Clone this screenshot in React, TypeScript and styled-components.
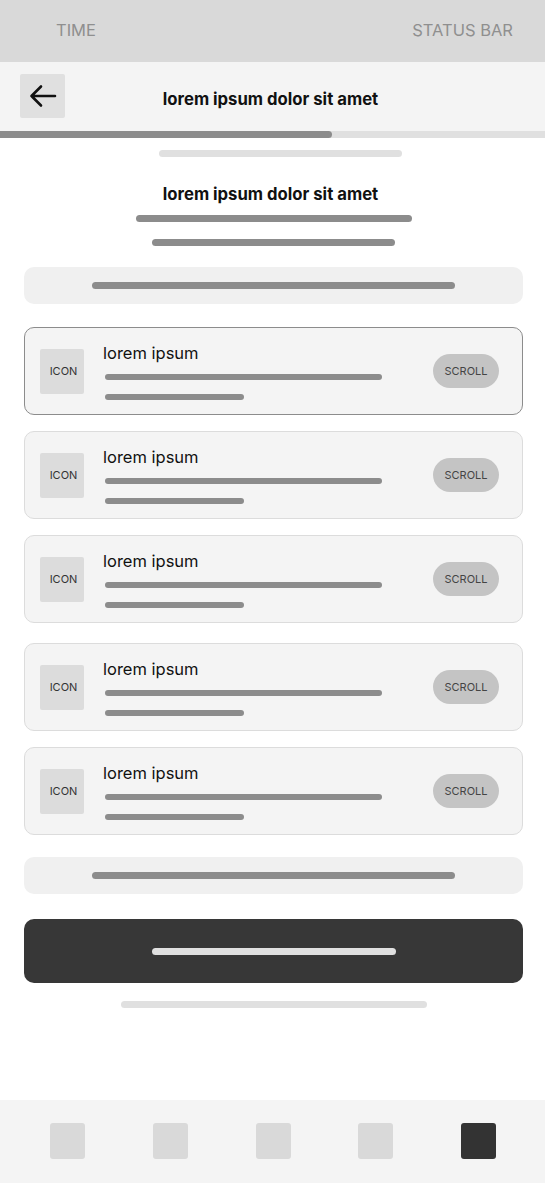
import styled, { createGlobalStyle } from "styled-components";

const Global = createGlobalStyle`
  * { box-sizing: border-box; }
  body {
    margin: 0;
    background: #ffffff;
    font-family: Inter, "Liberation Sans", sans-serif;
    color: #111111;
  }
`;

const Page = styled.div`
  display: flex;
  flex-direction: column;
  min-height: 1183px;
  width: 545px;
`;

const StatusBar = styled.div`
  display: flex;
  align-items: center;
  justify-content: space-between;
  height: 62px;
  padding: 0 32px 2px 56px;
  background: #d9d9d9;
  color: #8f8f8f;
  font-size: 16.5px;
`;

const NavBar = styled.div`
  display: grid;
  grid-template-columns: 45px 1fr 45px;
  align-items: center;
  height: 69px;
  padding: 0 20px;
  background: #f4f4f4;
`;

const BackButton = styled.div`
  display: flex;
  align-items: center;
  justify-content: center;
  width: 45px;
  height: 44px;
  margin-top: -2px;
  border-radius: 2px;
  background: #e0e0e0;
`;

const NavTitle = styled.div`
  text-align: center;
  font-size: 16.7px;
  font-weight: 700;
  margin-top: 4px;
  margin-right: 4px;
`;

const Progress = styled.div`
  height: 7px;
  background: #e0e0e0;
`;

const ProgressFill = styled.div`
  height: 100%;
  background: #8c8c8c;
  border-radius: 0 4px 4px 0;
`;

const Main = styled.div`
  display: flex;
  flex-direction: column;
  align-items: center;
  padding: 0 22px 0 24px;
`;

const Line = styled.div<{ $w: number; $light?: boolean; $top?: number; $shift?: number }>`
  width: ${(p) => p.$w}px;
  height: 7px;
  border-radius: 4px;
  background: ${(p) => (p.$light ? "#e0e0e0" : "#8c8c8c")};
  margin-top: ${(p) => p.$top ?? 0}px;
  margin-left: ${(p) => (p.$shift ?? 0) * 2}px;
`;

const Heading = styled.div`
  margin: 27px 6px 0 0;
  font-size: 16.7px;
  font-weight: 700;
  line-height: 20px;
`;

const InfoBox = styled.div<{ $top: number }>`
  display: flex;
  justify-content: center;
  align-items: center;
  align-self: stretch;
  height: 37px;
  margin-top: ${(p) => p.$top}px;
  border-radius: 10px;
  background: #f0f0f0;
`;

const CardList = styled.div`
  display: flex;
  flex-direction: column;
  align-self: stretch;
  gap: 16px;
  margin-top: 23px;
`;

const Card = styled.div<{ $active?: boolean; $extra?: number }>`
  display: flex;
  align-items: center;
  height: 88px;
  padding: 0 23px 0 15px;
  margin-top: ${(p) => p.$extra ?? 0}px;
  border: 1px solid ${(p) => (p.$active ? "#8c8c8c" : "#dcdcdc")};
  border-radius: 10px;
  background: #f4f4f4;
`;

const IconBox = styled.div`
  display: flex;
  align-items: center;
  justify-content: center;
  width: 44px;
  height: 45px;
  padding-left: 3px;
  border-radius: 2px;
  background: #dcdcdc;
  font-size: 11px;
  color: #333333;
`;

const CardBody = styled.div`
  display: flex;
  flex-direction: column;
  flex: 1;
  padding: 0 0 0 19px;
`;

const CardTitle = styled.div`
  font-size: 16.5px;
  line-height: 20px;
  color: #111111;
  margin-bottom: 11px;
`;

const CardLine = styled.div<{ $w: number; $top?: number }>`
  width: ${(p) => p.$w}px;
  height: 6px;
  margin-left: 2px;
  margin-top: ${(p) => p.$top ?? 0}px;
  border-radius: 3px;
  background: #8c8c8c;
`;

const ScrollPill = styled.div`
  display: flex;
  align-items: center;
  justify-content: center;
  width: 66px;
  height: 34px;
  border-radius: 17px;
  background: #c4c4c4;
  font-size: 11px;
  color: #444444;
`;

const PrimaryButton = styled.div`
  display: flex;
  align-items: center;
  justify-content: center;
  align-self: stretch;
  height: 64px;
  margin-top: 25px;
  border-radius: 10px;
  background: #373737;
`;

const TabBar = styled.div`
  display: flex;
  align-items: center;
  justify-content: space-between;
  height: 83px;
  margin-top: auto;
  padding: 0 49px 2px 50px;
  background: #f4f4f4;
`;

const Tab = styled.div<{ $active?: boolean }>`
  width: 35px;
  height: 36px;
  border-radius: 3px;
  background: ${(p) => (p.$active ? "#333333" : "#d9d9d9")};
`;

function BackArrow() {
  return (
    <svg width="28" height="24" viewBox="0 0 28 24" fill="none">
      <path
        d="M26 12H2.5M12 2.5L2.5 12L12 21.5"
        stroke="#111"
        strokeWidth="2.6"
        strokeLinecap="round"
        strokeLinejoin="round"
      />
    </svg>
  );
}

const cards = [{ active: true }, {}, {}, { extra: 4 }, {}];

export default function App() {
  return (
    <Page>
      <Global />
      <StatusBar>
        <span>TIME</span>
        <span>STATUS BAR</span>
      </StatusBar>
      <NavBar>
        <BackButton>
          <BackArrow />
        </BackButton>
        <NavTitle>lorem ipsum dolor sit amet</NavTitle>
        <span />
      </NavBar>
      <Progress>
        <ProgressFill style={{ width: "61%" }} />
      </Progress>
      <Main>
        <Line $w={243} $light $top={12} $shift={7} />
        <Heading>lorem ipsum dolor sit amet</Heading>
        <Line $w={276} $top={11} />
        <Line $w={243} $top={17} />
        <InfoBox $top={21}>
          <Line $w={363} />
        </InfoBox>
        <CardList>
          {cards.map((c, i) => (
            <Card key={i} $active={c.active} $extra={c.extra}>
              <IconBox>ICON</IconBox>
              <CardBody>
                <CardTitle>lorem ipsum</CardTitle>
                <CardLine $w={277} />
                <CardLine $w={139} $top={14} />
              </CardBody>
              <ScrollPill>SCROLL</ScrollPill>
            </Card>
          ))}
        </CardList>
        <InfoBox $top={22}>
          <Line $w={363} />
        </InfoBox>
        <PrimaryButton>
          <Line $w={244} $light />
        </PrimaryButton>
        <Line $w={306} $light $top={18} />
      </Main>
      <TabBar>
        <Tab />
        <Tab />
        <Tab />
        <Tab />
        <Tab $active />
      </TabBar>
    </Page>
  );
}
